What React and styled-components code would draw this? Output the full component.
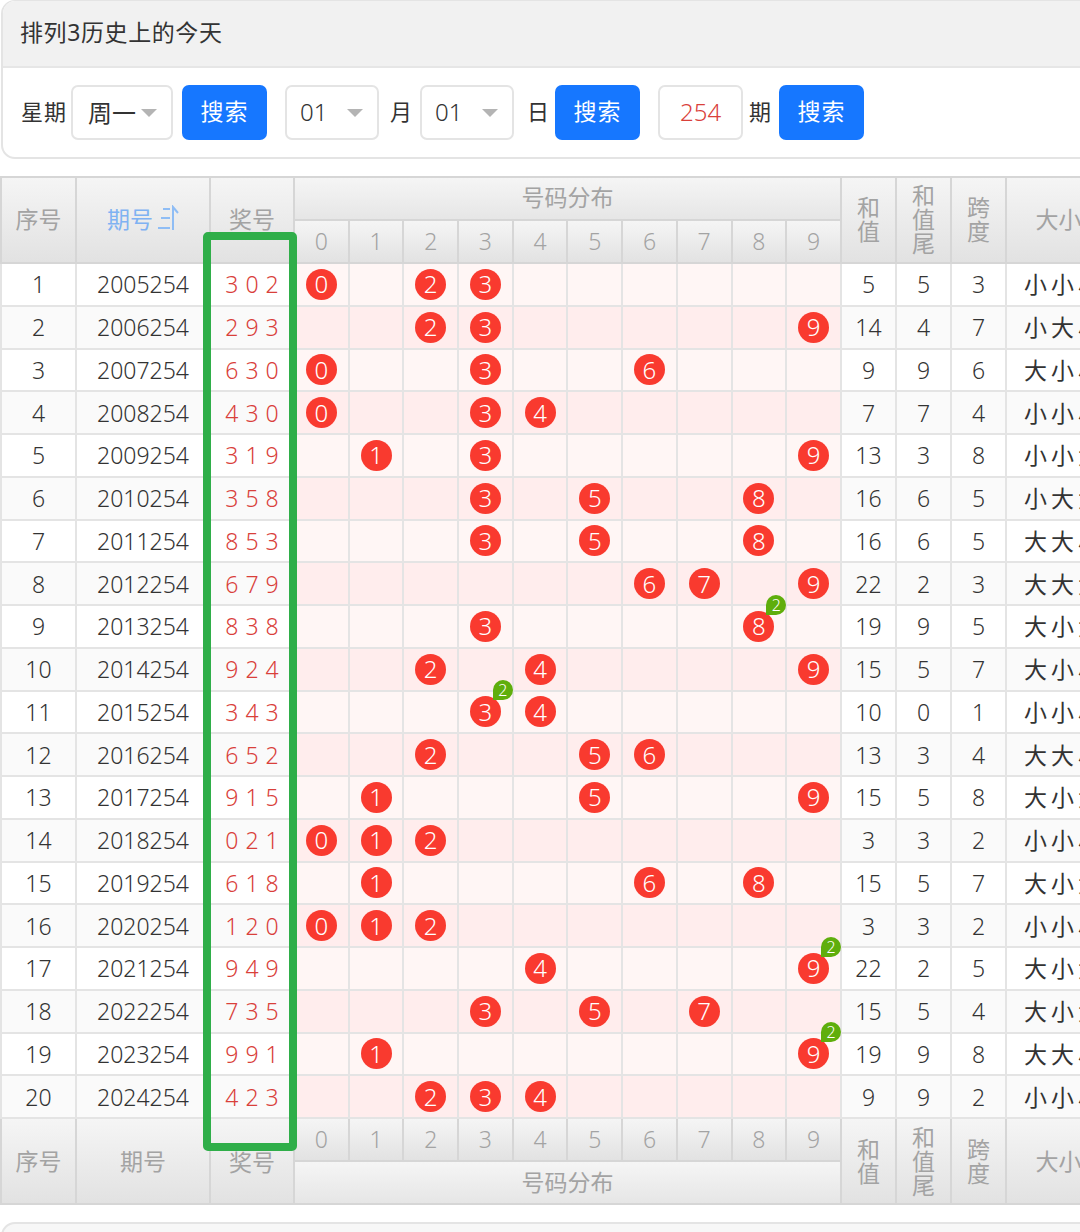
import React from 'react';
import styled, { createGlobalStyle } from 'styled-components';

const GlobalStyle = createGlobalStyle`
    html, body {
        margin: 0;
        background: #fff;
        overflow: hidden;
    }
    body {
        font-family: "Noto Sans", "Noto Sans CJK SC", sans-serif;
        color: #333;
    }
`;

const Page = styled.div`
    position: relative;
    width: 1080px;
    height: 1232px;
    overflow: hidden;
`;

const Panel = styled.div`
    box-sizing: border-box;
    width: 1110px;
    height: 159px;
    margin-left: 1px;
    border: 2px solid #e4e4e4;
    border-top-width: 1px;
    border-radius: 14px;
    overflow: hidden;
`;

const PanelTitle = styled.div`
    box-sizing: border-box;
    height: 67px;
    padding: 0 0 5px 17px;
    display: flex;
    align-items: center;
    background: #f1f1f1;
    border-bottom: 2px solid #e6e6e6;
    font-size: 23px;
    color: #333;
    letter-spacing: 0.6px;
`;

const FilterRow = styled.div`
    display: flex;
    align-items: center;
    height: 89px;
    padding: 0 0 0 18px;
`;

const Label = styled.span`
    font-size: 22px;
    color: #333;
    padding-bottom: 5px;
    margin-left: ${(p) => p.$left || 0}px;
    margin-right: ${(p) => p.$right || 0}px;
    letter-spacing: ${(p) => p.$spacing || 0}px;
`;

const Select = styled.div`
    box-sizing: border-box;
    width: ${(p) => p.$width}px;
    height: 55px;
    margin-left: ${(p) => p.$left || 0}px;
    padding: 0 14px 3px ${(p) => p.$inset || 13}px;
    display: flex;
    align-items: center;
    justify-content: space-between;
    border: 2px solid #e4e4e4;
    border-radius: 7px;
    font-size: 24px;
    color: #333;
    font-weight: ${(p) => p.$weight || 300};
`;

const Caret = styled.i`
    width: 0;
    height: 0;
    margin-top: 3px;
    border-left: 8px solid transparent;
    border-right: 8px solid transparent;
    border-top: 8px solid #b4b4b4;
`;

const SearchButton = styled.button`
    box-sizing: border-box;
    width: 85px;
    height: 55px;
    margin-left: ${(p) => p.$left || 0}px;
    padding: 0 0 5px;
    border: none;
    border-radius: 7px;
    background: #1677ff;
    color: #fff;
    font-family: inherit;
    font-size: 23px;
    letter-spacing: 1px;
`;

const IssueInput = styled.div`
    box-sizing: border-box;
    width: 85px;
    height: 55px;
    margin-left: 18px;
    padding-bottom: 3px;
    display: flex;
    align-items: center;
    justify-content: center;
    border: 2px solid #e4e4e4;
    border-radius: 7px;
    font-size: 24px;
    font-weight: 300;
    color: #d9403a;
`;

const Table = styled.table`
    table-layout: fixed;
    width: 1112px;
    margin: 17px 0 0;
    border-collapse: collapse;
`;

const Head = styled.th`
    box-sizing: border-box;
    padding: 0 0 ${(p) => p.$lift ?? 5}px;
    height: ${(p) => p.$height || 43}px;
    background: linear-gradient(#f5f5f5, ${(p) => p.$end || '#e2e2e2'});
    border: 2px solid #d6d6d6;
    color: ${(p) => p.$color || '#a3a3a3'};
    font-size: 23px;
    font-weight: 400;
    line-height: ${(p) => p.$leading || 'normal'};
`;

const Cell = styled.td`
    box-sizing: border-box;
    padding: 0;
    height: 42.75px;
    text-align: center;
    background: ${(p) => p.$bg};
    border: 2px solid #e4e4e4;
    font-size: 23px;
    line-height: 30px;
    font-weight: 300;
    color: #333;
`;

const PrizeCell = styled(Cell)`
    color: #d9403a;
    white-space: nowrap;
    word-spacing: 1px;
`;

const ShapeCell = styled(Cell)`
    text-align: left;
    padding-left: 17px;
    white-space: nowrap;
    font-weight: 400;
    font-size: 23px;
    letter-spacing: 4px;
`;

const Ball = styled.span`
    position: relative;
    width: 31px;
    height: 31px;
    margin: 0 auto;
    display: flex;
    align-items: center;
    justify-content: center;
    border-radius: 50%;
    background: #f93a2f;
    color: #fff;
    font-size: 24px;
    font-weight: 300;
`;

const Badge = styled.span`
    position: absolute;
    top: -16px;
    right: -12px;
    width: 20px;
    height: 20px;
    display: flex;
    align-items: center;
    justify-content: center;
    border-radius: 50% 50% 50% 0;
    background: #5fae0c;
    color: #fff;
    font-size: 16px;
    line-height: 20px;
    font-weight: 300;
`;

const HeadLabel = styled.span`
    display: inline-flex;
    align-items: center;
    gap: 5px;
`;

const Highlight = styled.div`
    position: absolute;
    left: 203px;
    top: 232px;
    box-sizing: border-box;
    width: 94px;
    height: 919px;
    border: 8px solid #2fae49;
    border-radius: 5px;
    pointer-events: none;
`;

const FooterPanel = styled.div`
    box-sizing: border-box;
    width: 1110px;
    height: 40px;
    margin: 17px 0 0 1px;
    background: #f7f7f7;
    border: 2px solid #e4e4e4;
    border-radius: 14px;
`;

const SortIcon = () => (
    <svg width="21" height="26" viewBox="0 0 21 26" fill="none" stroke="#8fbdf5" strokeWidth="2">
        <path d="M5 4h7M3 13h9M0 23h12" />
        <path d="M15 25V2l5 6" />
    </svg>
);

const years = Array.from({ length: 20 }, (_, i) => 2005 + i);
const draws = [
    '302', '293', '630', '430', '319', '358', '853', '679', '838', '924',
    '343', '652', '915', '021', '618', '120', '949', '735', '991', '423',
];
const slots = [0, 1, 2, 3, 4, 5, 6, 7, 8, 9];

const SlotHeads = () =>
    slots.map((n) => (
        <Head key={n} $lift={2}>
            <span style={{ fontWeight: 300 }}>{n}</span>
        </Head>
    ));

const DrawRow = ({ index, draw }) => {
    const digits = draw.split('').map(Number);
    const sum = digits.reduce((a, b) => a + b, 0);
    const span = Math.max(...digits) - Math.min(...digits);
    const odd = index % 2 === 0;
    const plain = odd ? '#fff' : '#fafafa';
    const tinted = odd ? '#fff6f5' : '#ffeded';

    return (
        <tr>
            <Cell $bg={plain}>{index + 1}</Cell>
            <Cell $bg={plain}>{years[index]}254</Cell>
            <PrizeCell $bg={plain}>{digits.join(' ')}</PrizeCell>
            {slots.map((n) => {
                const count = digits.filter((d) => d === n).length;
                return (
                    <Cell key={n} $bg={tinted}>
                        {count > 0 && (
                            <Ball>
                                {n}
                                {count > 1 && <Badge>{count}</Badge>}
                            </Ball>
                        )}
                    </Cell>
                );
            })}
            <Cell $bg={plain}>{sum}</Cell>
            <Cell $bg={plain}>{sum % 10}</Cell>
            <Cell $bg={plain}>{span}</Cell>
            <ShapeCell $bg={plain}>{digits.map((d) => (d >= 5 ? '大' : '小')).join('')}</ShapeCell>
        </tr>
    );
};

const App = () => (
    <Page>
        <GlobalStyle />
        <Panel>
            <PanelTitle>排列3历史上的今天</PanelTitle>
            <FilterRow>
                <Label $right={4} $spacing={1}>星期</Label>
                <Select $width={102} $inset={15} $weight={400}>周一<Caret /></Select>
                <SearchButton $left={9}>搜索</SearchButton>
                <Select $width={94} $left={18}>01<Caret /></Select>
                <Label $left={11} $right={8}>月</Label>
                <Select $width={94}>01<Caret /></Select>
                <Label $left={13} $right={6}>日</Label>
                <SearchButton>搜索</SearchButton>
                <IssueInput>254</IssueInput>
                <Label $left={6} $right={8}>期</Label>
                <SearchButton>搜索</SearchButton>
            </FilterRow>
        </Panel>
        <Table>
            <colgroup>
                <col style={{ width: 75 }} />
                <col style={{ width: 134 }} />
                <col style={{ width: 84 }} />
                {slots.map((n) => <col key={n} style={{ width: 54.7 }} />)}
                <col style={{ width: 55 }} />
                <col style={{ width: 55 }} />
                <col style={{ width: 55 }} />
                <col />
            </colgroup>
            <thead>
                <tr>
                    <Head rowSpan={2}>序号</Head>
                    <Head rowSpan={2} $color="#7fb2f2">
                        <HeadLabel>期号<SortIcon /></HeadLabel>
                    </Head>
                    <Head rowSpan={2}>奖号</Head>
                    <Head colSpan={10} $end="#e6e6e6">号码分布</Head>
                    <Head rowSpan={2} $leading="24px" $lift={3}>和<br />值</Head>
                    <Head rowSpan={2} $leading="24px" $lift={3}>和<br />值<br />尾</Head>
                    <Head rowSpan={2} $leading="24px" $lift={3}>跨<br />度</Head>
                    <Head rowSpan={2}>大小</Head>
                </tr>
                <tr><SlotHeads /></tr>
            </thead>
            <tbody>
                {draws.map((draw, i) => <DrawRow key={i} index={i} draw={draw} />)}
            </tbody>
            <tfoot>
                <tr>
                    <Head rowSpan={2} $lift={3}>序号</Head>
                    <Head rowSpan={2} $lift={3}>期号</Head>
                    <Head rowSpan={2} $lift={1}>奖号</Head>
                    <SlotHeads />
                    <Head rowSpan={2} $leading="24px" $lift={1}>和<br />值</Head>
                    <Head rowSpan={2} $leading="24px" $lift={1}>和<br />值<br />尾</Head>
                    <Head rowSpan={2} $leading="24px" $lift={1}>跨<br />度</Head>
                    <Head rowSpan={2} $lift={3}>大小</Head>
                </tr>
                <tr>
                    <Head colSpan={10} $end="#e6e6e6" $lift={3}>号码分布</Head>
                </tr>
            </tfoot>
        </Table>
        <FooterPanel />
        <Highlight />
    </Page>
);

export default App;
